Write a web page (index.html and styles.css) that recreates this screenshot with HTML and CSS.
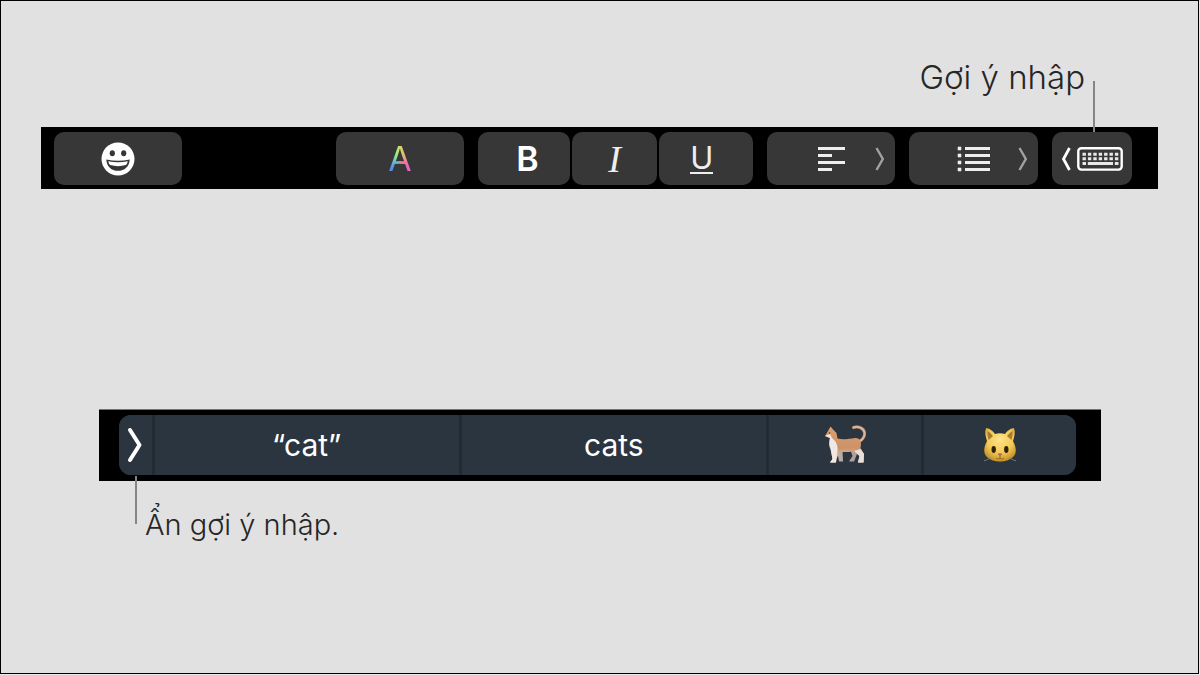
FILE: index.html
```html
<!DOCTYPE html>
<html lang="vi">
<head>
<meta charset="utf-8">
<meta name="viewport" content="width=device-width, initial-scale=1">
<title>Gợi ý nhập – Touch Bar</title>
<link rel="stylesheet" href="styles.css">
</head>
<body>
<main class="sheet">
  <section class="figure figure-tools">
    <p class="callout callout-top">Gợi ý nhập</p>
    <div class="bar tools">
      <button class="key wide" type="button" aria-label="Emoji">
        <svg width="34" height="34" viewBox="0 0 34 34" aria-hidden="true">
          <circle cx="17" cy="17" r="16.5" fill="#fff"/>
          <ellipse cx="11.3" cy="11.2" rx="2.6" ry="3" fill="#363636"/>
          <ellipse cx="22.7" cy="11.2" rx="2.6" ry="3" fill="#363636"/>
          <path d="M5.3 17.4Q17 20 28.7 17.4C28.4 24.5 23.5 28.8 17 28.8S5.6 24.5 5.3 17.4Z" fill="#363636"/>
          <path d="M7.2 19.2Q17 21.3 26.8 19.2Q26.2 22 24.8 23.1Q17 25.4 9.2 23.1Q7.8 22 7.2 19.2Z" fill="#fff"/>
        </svg>
      </button>
      <span class="spacer"></span>
      <button class="key wide" type="button" aria-label="Màu chữ"><span class="rainbow">A</span></button>
      <div class="group">
        <button class="key key-b" type="button"><b class="bold">B</b></button>
        <button class="key key-i" type="button"><i class="italic">I</i></button>
        <button class="key key-u" type="button"><span class="underline">U</span></button>
      </div>
      <button class="key wide menu" type="button" aria-label="Căn lề">
        <svg width="27" height="26" viewBox="0 0 27 26" fill="#eee" aria-hidden="true">
          <path d="M0 1h27v3H0zM0 8h14v3H0zM0 15h27v3H0zM0 22h14v3H0z"/>
        </svg>
        <svg class="more" width="10" height="24" viewBox="0 0 10 24" fill="none" stroke="#a2a2a2" stroke-width="2.4" aria-hidden="true"><path d="M1.5 1L7.8 12L1.5 23"/></svg>
      </button>
      <button class="key wide menu" type="button" aria-label="Danh sách">
        <svg width="34" height="26" viewBox="0 0 34 26" fill="#eee" aria-hidden="true">
          <path d="M8 1h25v3H8zM8 8h25v3H8zM8 15h25v3H8zM8 22h25v3H8z"/>
          <path d="M1 1h3v3H1zM1 8h3v3H1zM1 15h3v3H1zM1 22h3v3H1z" stroke="#eee" stroke-width=".6" stroke-linejoin="round"/>
        </svg>
        <svg class="more" width="10" height="24" viewBox="0 0 10 24" fill="none" stroke="#a2a2a2" stroke-width="2.4" aria-hidden="true"><path d="M1.5 1L7.8 12L1.5 23"/></svg>
      </button>
      <button class="key key-typing" type="button" aria-label="Hiện gợi ý nhập">
        <svg width="62" height="26" viewBox="0 0 62 26" fill="none" stroke="#fff" aria-hidden="true">
          <path d="M8.5 2L2.5 13L8.5 24" stroke-width="2.8"/>
          <rect x="17.3" y="2.2" width="43.4" height="21.4" rx="3" stroke-width="2.4"/>
          <path d="M21.5 8.2H57.5M21.5 12.8H57.5" stroke="#e8e8e8" stroke-width="3" stroke-dasharray="3.4 2"/>
          <path d="M21.5 17.6H25M26.8 17.6H52M53.8 17.6H57.5" stroke="#e8e8e8" stroke-width="3"/>
        </svg>
      </button>
    </div>
  </section>

  <section class="figure figure-suggest">
    <div class="bar suggest">
      <div class="strip">
        <button class="cell cell-hide" type="button" aria-label="Ẩn gợi ý nhập">
          <svg width="16" height="36" viewBox="0 0 16 36" fill="none" stroke="#fff" stroke-width="4" stroke-linecap="round" stroke-linejoin="round" aria-hidden="true"><path d="M3 3L12.5 18L3 33"/></svg>
        </button>
        <button class="cell cell-word" type="button">“cat”</button>
        <button class="cell cell-word" type="button">cats</button>
        <button class="cell cell-emoji" type="button" aria-label="Con mèo">
          <svg width="42" height="40" viewBox="0 0 42 40" aria-hidden="true">
            <defs>
              <linearGradient id="fur" x1="0" y1="0" x2="0" y2="1"><stop offset="0" stop-color="#dda06f"/><stop offset=".6" stop-color="#cb9268"/><stop offset="1" stop-color="#eee2da"/></linearGradient>
            </defs>
            <path d="M36 16C39 14 41 11 40.5 7.5C40 3.5 34 .5 29.5 2.5" fill="none" stroke="#8c6852" stroke-width="3.2" stroke-linecap="round"/>
            <path d="M36 16C39 14 41 11 40.5 7.5C40 3.5 34 .5 29.5 2.5" fill="none" stroke="#d9b69c" stroke-width="2.2" stroke-linecap="round"/>
            <path d="M26 24L28.5 31L25 36.5H30L33 29L30 23Z" fill="#b2a19a"/>
            <path d="M13 25L15 36.5H19L18.5 25Z" fill="#b8aaa5"/>
            <path d="M1 11L4 6L6.5 1.5L9.5 5L12.5 8L13.5 13.5C18 15 25 14 31 13C36 12.5 38 17 36.5 23L40 29L39.5 37.5H34L35.5 31L30 26C24 28 19 26.5 15.5 27L12.5 34L12 37.5H6L8.5 34L6.5 23C4.5 19 5.5 15 6 13Z" fill="url(#fur)"/>
            <path d="M1 11L6 9L8 13L11 16C14 20 14 25 13 28L12 37.5H6L8.5 34L6.5 24C4.5 20 5.5 16 6 13Z" fill="#f0e8e4"/>
            <path d="M30 26L35.5 31L34 37.5H39.5L40 29L36.5 24Z" fill="#e7deda"/>
            <circle cx="5.5" cy="8" r=".8" fill="#4b352b"/>
          </svg>
        </button>
        <button class="cell cell-emoji" type="button" aria-label="Mặt mèo">
          <svg width="34" height="36" viewBox="0 0 34 36" aria-hidden="true">
            <defs>
              <radialGradient id="face" cx=".5" cy=".35" r=".65"><stop offset="0" stop-color="#ffe489"/><stop offset=".6" stop-color="#f4ca55"/><stop offset="1" stop-color="#c49227"/></radialGradient>
            </defs>
            <path d="M3 1C6 1 10 4 12 7Q17 5.5 22 7C24 4 28 1 31 1C32.5 5 31.5 10 30 14C32 18 33.5 22 32.5 26C31 32 23 34.5 17 34.5S3 32 1.5 26C.5 22 2 18 4 14C2.5 10 1.5 5 3 1Z" fill="url(#face)"/>
            <path d="M4.5 4Q8 6 10 9L5.5 13Q4 8 4.5 4ZM29.5 4Q26 6 24 9L28.5 13Q30 8 29.5 4Z" fill="#a77b35"/>
            <ellipse cx="10.7" cy="22.5" rx="2.2" ry="3.4" fill="#30220c"/><ellipse cx="23.3" cy="22.5" rx="2.2" ry="3.4" fill="#30220c"/>
            <path d="M14.5 27Q17 25.5 19.5 27L17 29.5Z" fill="#a96a68"/>
            <path d="M17 29V32M13 31Q15.5 33.5 17 31Q18.5 33.5 21 31" fill="none" stroke="#92661d"/>
            <path d="M8 31L1 34M26 31L33 34" stroke="#8b8474" stroke-width=".8"/>
          </svg>
        </button>
      </div>
    </div>
    <p class="callout callout-bottom">Ẩn gợi ý nhập.</p>
  </section>
</main>
</body>
</html>
```
FILE: styles.css
```css
* {
  box-sizing: border-box;
}

body {
  margin: 0;
  background: #e8e8e8;
  color: #262626;
  font-family: Inter, "Noto Sans", sans-serif;
}

.sheet {
  min-height: calc(100vh - 1px);
  margin: 0 1px 1px 0;
  padding: 56px 40px 0;
  border: 1px solid #000;
  background: #e1e1e1;
}

.callout {
  position: relative;
  margin: 0;
  font-weight: 300;
}

.callout::after {
  content: "";
  position: absolute;
  width: 2px;
  background: #858585;
}

.callout-top {
  margin-right: 73px;
  padding-bottom: 30px;
  font-size: 33px;
  line-height: 40px;
  text-align: right;
}

.callout-top::after {
  top: 24px;
  right: -10px;
  height: 52px;
}

.callout-bottom {
  padding: 24px 0 0 46px;
  font-size: 29px;
  line-height: 40px;
}

.callout-bottom::after {
  top: -5px;
  left: 36px;
  height: 48px;
}

.bar {
  display: flex;
  background: #000;
}

.tools {
  padding: 5px 26px 4px 13px;
}

button {
  display: flex;
  align-items: center;
  justify-content: center;
  min-width: 0;
  padding: 0;
  border: 0;
  color: #fff;
  font-family: inherit;
}

.key {
  position: relative;
  height: 53px;
  border-radius: 10px;
  background: #373737;
}

.wide {
  flex: 128 1 0;
}

.spacer {
  flex: 153 1 0;
}

.group {
  display: flex;
  flex: 274 1 0;
  gap: 2px;
  margin: 0 14px;
}

.key-b {
  flex: 86 1 0;
  padding-left: 6px;
}

.key-i {
  flex: 84 1 0;
}

.key-u {
  flex: 86 1 0;
  padding-right: 8px;
}

.menu {
  margin-right: 14px;
}

.more {
  position: absolute;
  right: 10px;
}

.key-typing {
  flex: 80 1 0;
}

.rainbow {
  background: conic-gradient(from 0deg at 50% 60%, #d8d860, #f070a0 90deg, #e060d8 140deg, #5b7cf0 220deg, #60b8d0 270deg, #a0f080 345deg, #d8d860);
  -webkit-background-clip: text;
  background-clip: text;
  color: transparent;
  font-size: 34px;
}

.bold {
  font-size: 34px;
  font-weight: 600;
}

.italic {
  color: #eee;
  font-family: "Liberation Serif", serif;
  font-size: 38px;
}

.underline {
  border-bottom: 2px solid #eee;
  color: #eee;
  font-size: 31px;
  line-height: 28px;
}

.figure-suggest {
  padding: 220px 57px 0 58px;
}

.suggest {
  padding: 5px 25px 6px 20px;
  border-top: 1px solid #6f7772;
}

.strip {
  display: flex;
  flex: 1;
  overflow: hidden;
  border-radius: 12px;
  background: #2b353f;
}

.cell {
  height: 60px;
  background: #2b353f;
  font-size: 30px;
  font-weight: 400;
}

.cell + .cell {
  border-left: 3px solid #222a32;
}

.cell-hide {
  flex: 33 1 0;
}

.cell-word {
  flex: 308 1 0;
}

.cell-emoji {
  flex: 154 1 0;
}
```
